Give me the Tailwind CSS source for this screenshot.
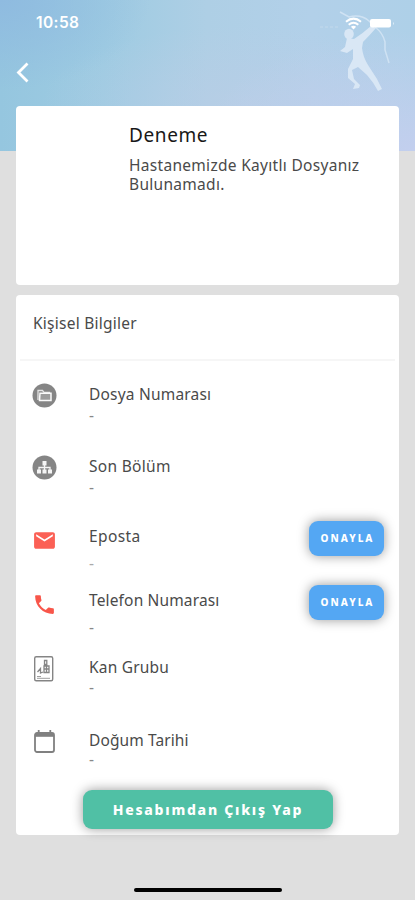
<!DOCTYPE html>
<html lang="tr">
<head>
<meta charset="utf-8">
<meta name="viewport" content="width=device-width, initial-scale=1">
<title>Hesabım</title>
<script src="https://cdn.jsdelivr.net/npm/@tailwindcss/browser@4"></script>
</head>
<body class="bg-[#dfdfdf]">
<div class="relative w-[415px] h-[900px] overflow-hidden bg-[#dfdfdf] font-['Noto_Sans',sans-serif] text-[#4a4a4a] flex flex-col">
  <div class="absolute inset-x-0 top-0 h-[151px] bg-[radial-gradient(ellipse_220px_120px_at_100%_100%,#c3cfee_0%,#c3cfee00_100%),radial-gradient(ellipse_200px_80px_at_58%_70%,#bccde699_0%,#bccde600_100%),radial-gradient(ellipse_150px_90px_at_0%_0%,#8fbbe0_0%,#8fbbe000_100%),linear-gradient(90deg,#95c6df_0%,#9ecbe2_25%,#aecfe5_50%,#b2d0e9_75%,#aed0e8_100%)]">
    <svg class="absolute left-[315px] top-[5px]" width="90" height="95" viewBox="0 0 90 95" fill="none">
      <g fill="#d9e7f5" transform="translate(5 0)">
        <ellipse cx="29" cy="29" rx="4.800" ry="5.200"/>
        <path d="M27 33 L34 34 Q42 29 51 21 L56 23 Q50 30 43 37 L42 43 Q43 52 48 60 L57 74 L62 84 L58 86 Q54 78 47 70 L38 62 L32 65 L34 74 L40 80 L39 83 L33 84 L35 79 L28 73 L28 64 L33 54 L33 44 L27 48 L20 46 L25 42 Z"/>
      </g>
      <path d="M25 7 L34 12 Q46 9 54 16 L60 22 Q68 28 70 37 L70 45 L74 58" stroke="#cfe2f3" stroke-width="1.500"/>
      <path d="M5 22 H24" stroke="#c3d9ec" stroke-width="1" stroke-dasharray="3 2"/>
    </svg>
  </div>

  <header class="relative h-[106px] text-white">
    <div class="flex items-center justify-between h-[46px] pl-[36px] pr-[20px]">
      <span class="font-['Inter',sans-serif] font-semibold text-[15.5px] tracking-[0.4px] leading-5">10:58</span>
      <div class="flex items-center gap-[8px]">
        <svg width="17" height="13" viewBox="0 0 17 13" fill="none" stroke="#fff" stroke-width="2"><path d="M1 4.700Q8.500-1.500 16 4.700M3.700 7.700Q8.500 3.800 13.300 7.700"/><path d="M5.900 9.800Q8.500 7.800 11.100 9.800L8.500 12.500Z" fill="#fff" stroke="none"/></svg>
        <svg width="25" height="9" viewBox="0 0 25 9"><rect width="21" height="8.500" rx="2" fill="#fff"/><path d="M23 3Q25 4.500 23 6Z" fill="#fff" opacity=".6"/></svg>
      </div>
    </div>
    <svg class="ml-[16px] mt-[16px]" width="14" height="21" viewBox="0 0 14 21" fill="none" stroke="#fff" stroke-width="2.800"><path d="M11.500 1.500L2.500 10.500L11.500 19.500"/></svg>
  </header>

  <section class="relative mx-4 h-[179px] rounded-[4px] bg-white pl-[113px] pt-[16px]">
    <h1 class="text-[19px] leading-[27px] tracking-[0.6px] text-[#181818] whitespace-nowrap">Deneme</h1>
    <p class="mt-[7px] text-[15.5px] leading-[19px] tracking-[0.3px] whitespace-nowrap">Hastanemizde Kayıtlı Dosyanız<br>Bulunamadı.</p>
  </section>

  <section class="relative mx-4 mt-[10px] h-[540px] rounded-[4px] bg-white flex flex-col">
    <h2 class="h-[64px] pl-[17px] pt-[18px] text-[15.5px] leading-5 tracking-[0.25px]">Kişisel Bilgiler</h2>
    <div class="mx-1 h-[2px] shrink-0 bg-[#f6f6f6]"></div>

    <div class="mt-[23px] flex h-[72px] pl-4">
      <svg class="w-[25px] h-[25px] mr-[32px] -mt-[1px] shrink-0" viewBox="0 0 25 25"><circle cx="12.500" cy="12.500" r="12" fill="#858585"/><path d="M6 17V7.500H10.500L12 9.300H17.500V11" fill="none" stroke="#e4e4e4" stroke-width="1.300"/><path d="M8 10.300H19V17.500H7.500Z" fill="#9c9c9c" stroke="#fafafa" stroke-width="1.500"/></svg>
      <div class="text-[15.5px] leading-5 tracking-[0.2px]"><p>Dosya Numarası</p><p class="mt-[1px] text-[#888]">-</p></div>
    </div>
    <div class="flex h-[70px] pl-4">
      <svg class="w-[25px] h-[25px] mr-[32px] -mt-[1px] shrink-0" viewBox="0 0 25 25"><circle cx="12.500" cy="12.500" r="12" fill="#858585"/><path d="M12.500 9V15M7 15V12.500H18V15" fill="none" stroke="#f5f5f5" stroke-width="1.300"/><path d="M10.500 6H14.500V10.500H10.500ZM5 14.500H9V18.500H5ZM10.500 14.500H14.500V18.500H10.500ZM16 14.500H20V18.500H16Z" fill="#f5f5f5"/></svg>
      <div class="text-[15.5px] leading-5 tracking-[0.3px]"><p>Son Bölüm</p><p class="mt-[1px] text-[#888]">-</p></div>
    </div>
    <div class="flex h-[64px] pl-4 pr-[15px]">
      <svg class="w-[25px] h-[25px] mr-[32px] mt-[2px] shrink-0" viewBox="0 0 24 24" fill="#fb6055"><path d="M20 4H4c-1.100 0-1.990.9-1.990 2L2 18c0 1.100.9 2 2 2h16c1.100 0 2-.9 2-2V6c0-1.100-.9-2-2-2zm0 4l-8 5-8-5V6l8 5 8-5v2z"/></svg>
      <div class="text-[15.5px] leading-5 tracking-[0.4px]"><p>Eposta</p><p class="mt-[7px] text-[#aaa]">-</p></div>
      <button class="ml-auto -mt-[5px] w-[75px] h-[35px] rounded-[9px] bg-[#54a7f3] text-white text-[10px] font-extrabold tracking-[2px] pl-[2px] shadow-[0_0_12px_rgba(0,0,0,0.4)]">ONAYLA</button>
    </div>
    <div class="flex h-[67px] pl-4 pr-[15px]">
      <svg class="w-[25px] h-[25px] mr-[32px] mt-[2px] shrink-0" viewBox="0 0 24 24" fill="#f8564a"><path d="M6.620 10.790c1.440 2.830 3.760 5.140 6.590 6.590l2.200-2.200c.27-.27.67-.36 1.020-.24 1.120.37 2.330.57 3.570.57.550 0 1 .45 1 1V20c0 .55-.45 1-1 1-9.390 0-17-7.610-17-17 0-.55.45-1 1-1h3.500c.55 0 1 .45 1 1 0 1.250.2 2.450.57 3.570.110.350.030.740-.25 1.020l-2.200 2.200z"/></svg>
      <div class="text-[15.5px] leading-5 tracking-[0.15px]"><p>Telefon Numarası</p><p class="mt-[7px] text-[#888]">-</p></div>
      <button class="ml-auto -mt-[5px] w-[75px] h-[35px] rounded-[9px] bg-[#54a7f3] text-white text-[10px] font-extrabold tracking-[2px] pl-[2px] shadow-[0_0_12px_rgba(0,0,0,0.4)]">ONAYLA</button>
    </div>
    <div class="flex h-[73px] pl-4">
      <svg class="w-[25px] h-[27px] mr-[32px] -mt-[2px] shrink-0" viewBox="0 0 25 27" fill="none" stroke="#858585"><rect x="2.700" y="1.700" width="18" height="24" rx="1.500" stroke-width="1.400"/><path d="M5 21.500H9M5 23.300H18" stroke-width=".8"/><path d="M12.500 5.500H14.800V9.500H12.500ZM12 11H17V17.500H12ZM12 14H17M14.500 11V17.500M5.500 17L8.500 13.500V18L11 17" stroke-width="1.300"/></svg>
      <div class="text-[15.5px] leading-5 tracking-[0.2px]"><p>Kan Grubu</p><p class="text-[#888]">-</p></div>
    </div>
    <div class="flex h-[60px] pl-4">
      <svg class="w-[25px] h-[25px] mr-[32px] -mt-[1px] shrink-0" viewBox="0 0 25 25" fill="none" stroke="#808080"><rect x="3" y="4" width="19" height="19" rx="2" stroke-width="1.800"/><path d="M3 6H22" stroke-width="3.600"/><path d="M6.700 1V5M18.300 1V5" stroke-width="1.800"/></svg>
      <div class="text-[15.5px] leading-5 tracking-[0.1px]"><p>Doğum Tarihi</p><p class="-mt-[1px] text-[#888]">-</p></div>
    </div>
    <button class="ml-[67px] w-[250px] h-[39px] shrink-0 rounded-[9px] bg-[#50c0a5] text-white text-[14px] font-extrabold tracking-[1.75px] shadow-[0_0_12px_rgba(0,0,0,0.4)]">Hesabımdan Çıkış Yap</button>
  </section>
  <div class="relative mx-auto mt-[53px] h-[4px] w-[148px] rounded-full bg-black"></div>
</div>
</body>
</html>
